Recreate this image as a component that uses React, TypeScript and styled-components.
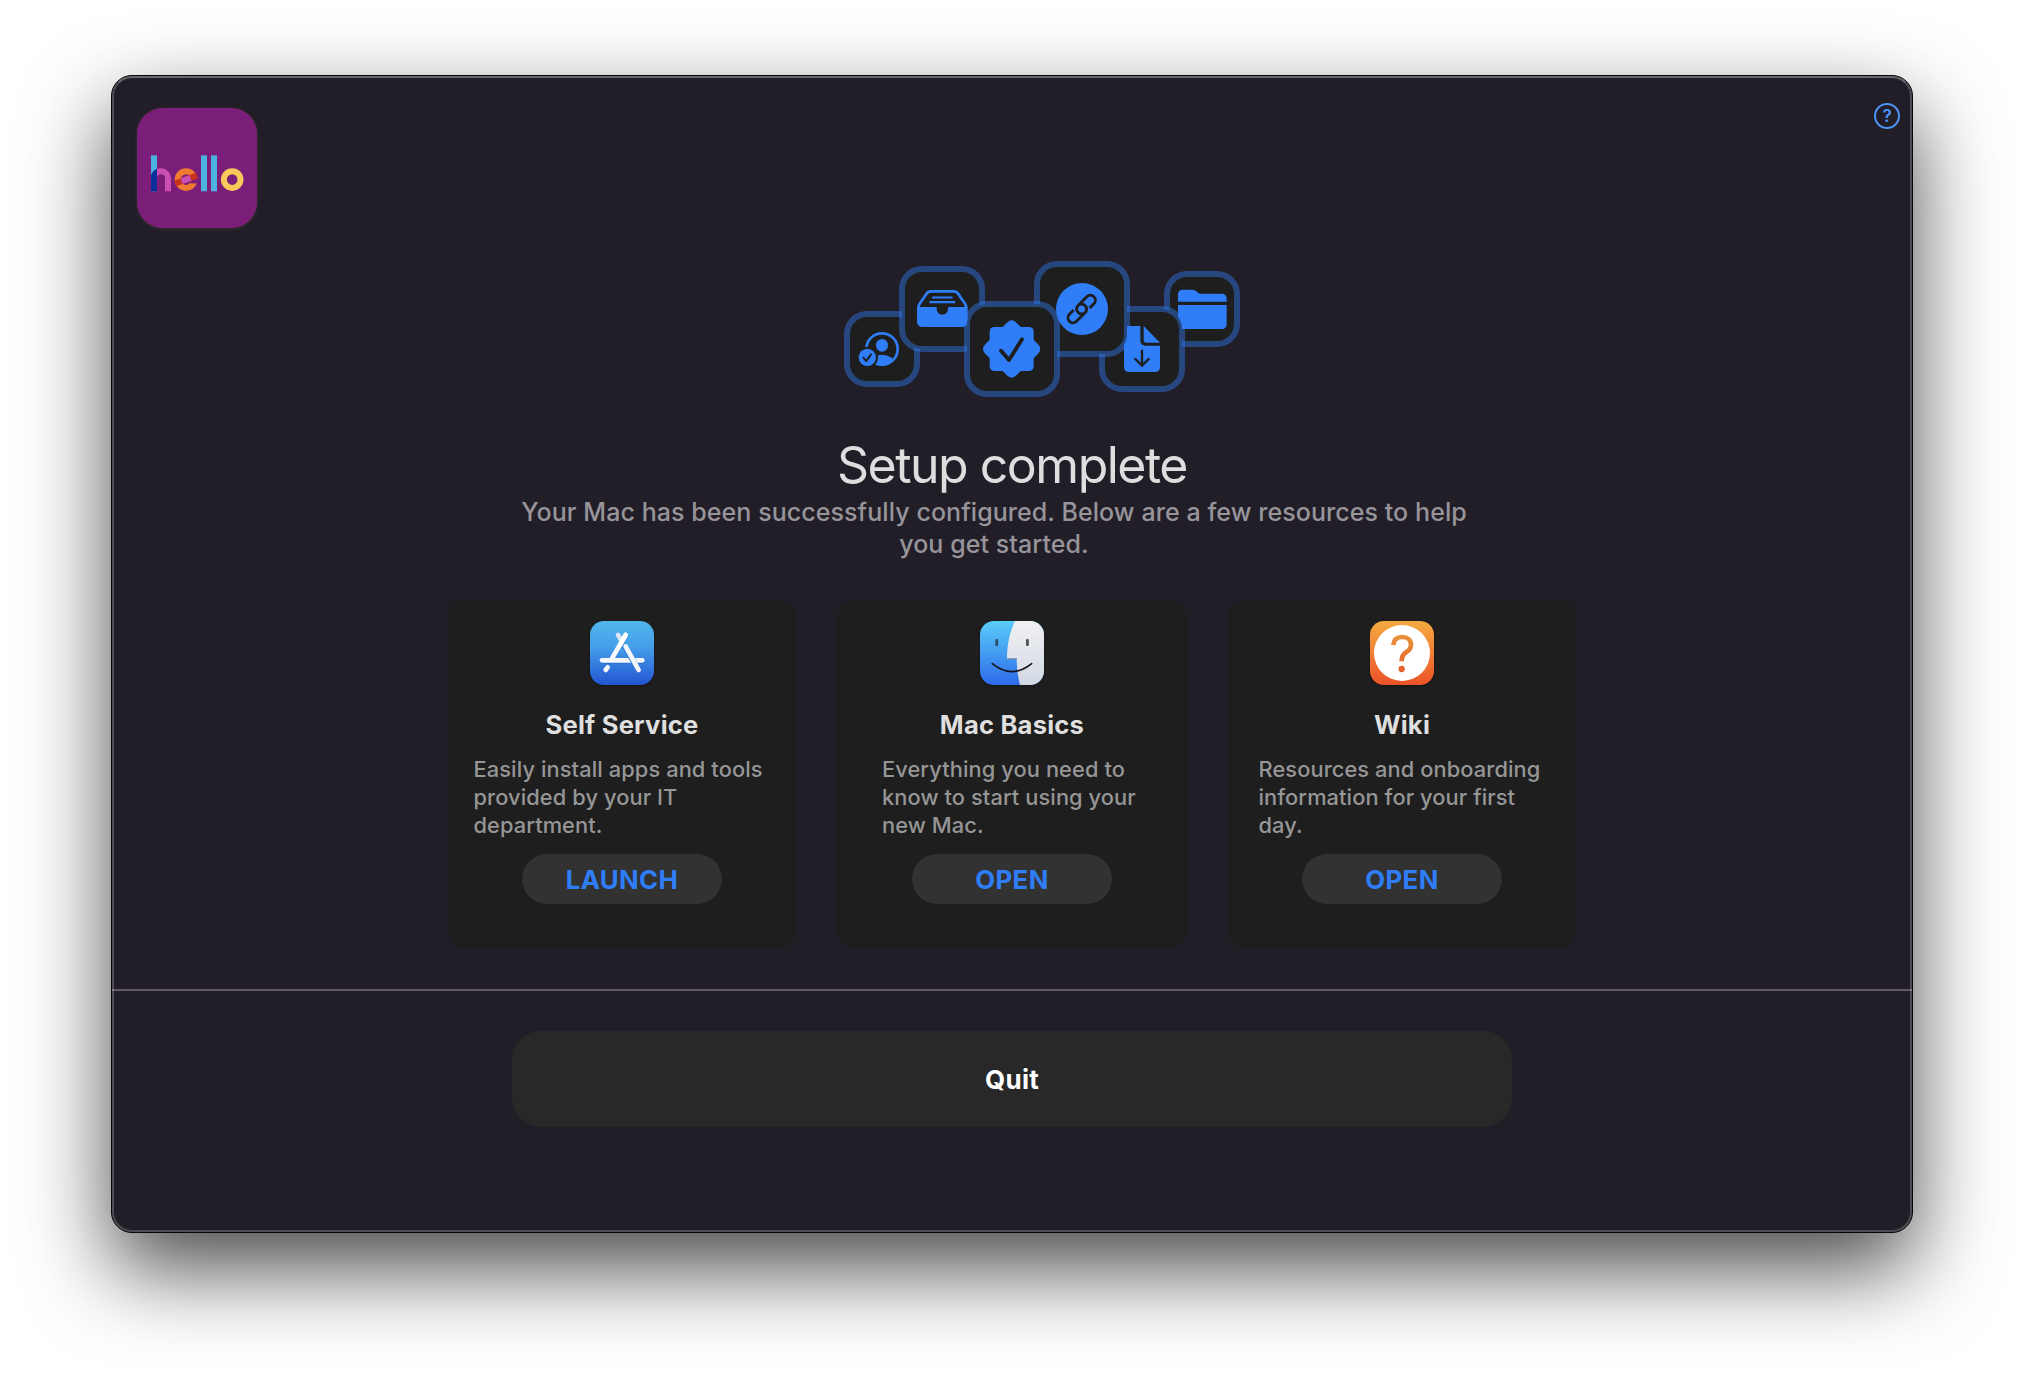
import React from 'react';
import styled, { createGlobalStyle } from 'styled-components';

const BLUE = '#2f7df7';
const DARK = '#1e1e1e';

const GlobalStyle = createGlobalStyle`
  * { box-sizing: border-box; }
  body {
    margin: 0;
    background: #fff;
    font-family: Inter, "Liberation Sans", sans-serif;
    overflow: hidden;
  }
`;

const Page = styled.div`
  display: flex;
  height: 1380px;
  width: 2024px;
  padding: 75px 111px 147px;
`;

const Window = styled.main`
  flex: 1;
  position: relative;
  display: flex;
  flex-direction: column;
  border: 1px solid #050506;
  border-radius: 21px;
  background: #221e28;
  box-shadow: 0 36px 86px rgba(0, 0, 0, 0.71);

  &::after {
    content: '';
    position: absolute;
    inset: 0;
    border-radius: 20px;
    border: 2px solid rgba(255, 255, 255, 0.2);
    border-top-color: rgba(255, 255, 255, 0.33);
    pointer-events: none;
  }
`;

const Content = styled.section`
  height: 913px;
  display: flex;
  flex-direction: column;
  align-items: center;
`;

const TopBar = styled.header`
  align-self: stretch;
  display: flex;
  justify-content: space-between;
  align-items: flex-start;
  padding: 27px 12px 0 25px;
`;

const Logo = styled.div`
  width: 120px;
  height: 120px;
  margin-top: 5px;
  border-radius: 26px;
  background: #7b1e7a;
  box-shadow: 0 0 1px rgba(140, 90, 80, 0.4), 0 1px 4px rgba(90, 90, 80, 0.3);
`;

const HelpButton = styled.button`
  width: 26px;
  height: 26px;
  padding: 0;
  display: flex;
  align-items: center;
  justify-content: center;
  border: 2px solid #4c94f8;
  border-radius: 50%;
  background: transparent;
  color: #4c94f8;
  font: 600 17px/22px Inter, sans-serif;
`;

const Cluster = styled.div`
  display: flex;
  align-items: flex-start;
  height: 136px;
  margin: 33px 0 0 60px;
`;

const Tile = styled.div<{ $size: number; $drop: number; $overlap: number; $layer: number }>`
  position: relative;
  flex: none;
  z-index: ${p => p.$layer};
  width: ${p => p.$size}px;
  height: ${p => p.$size}px;
  margin-top: ${p => p.$drop}px;
  margin-left: ${p => -p.$overlap}px;

  &::before {
    content: '';
    position: absolute;
    inset: 3px;
    border-radius: 20px;
    background: ${DARK};
  }
  &::after {
    content: '';
    position: absolute;
    inset: 0;
    border: 6px solid rgba(47, 125, 247, 0.44);
    border-radius: 23px;
  }
  svg {
    position: relative;
    display: block;
    width: 100%;
    height: 100%;
  }
`;

const Title = styled.h1`
  margin: 38px 0 0;
  font-size: 50px;
  line-height: 60px;
  font-weight: 440;
  letter-spacing: -1.5px;
  color: #dfdedf;
`;

const Subtitle = styled.p`
  width: 960px;
  margin: 1px 36px 0 0;
  font-size: 25px;
  line-height: 32px;
  font-weight: 500;
  letter-spacing: 0.07px;
  text-align: center;
  color: #97949a;
`;

const Cards = styled.div`
  display: flex;
  gap: 40px;
  margin-top: 39px;
`;

const Card = styled.article`
  width: 350px;
  height: 350px;
  padding-top: 22px;
  display: flex;
  flex-direction: column;
  align-items: center;
  border-radius: 20px;
  background: ${DARK};

  > svg {
    width: 64px;
    height: 64px;
    border-radius: 14px;
    flex: none;
    filter: drop-shadow(0 1px 1px rgba(0, 0, 0, 0.35));
  }
`;

const CardTitle = styled.h2`
  margin: 24px 0 14px;
  font-size: 25.6px;
  line-height: 32px;
  font-weight: 750;
  letter-spacing: 0.2px;
  color: #dfdfdf;
`;

const CardText = styled.p<{ $width: number }>`
  width: ${p => p.$width}px;
  height: 84px;
  margin: 0 0 15px;
  font-size: 21.8px;
  line-height: 28px;
  font-weight: 500;
  letter-spacing: 0.1px;
  white-space: pre-line;
  color: #969696;
`;

const CardButton = styled.button`
  width: 200px;
  height: 50px;
  padding: 1px 0 0;
  border: 0;
  border-radius: 25px;
  background: #323232;
  color: ${BLUE};
  font: 700 25.8px/49px Inter, sans-serif;
  letter-spacing: 0.35px;
`;

const Divider = styled.div`
  height: 2px;
  background: #5e5963;
`;

const Footer = styled.footer`
  display: flex;
  justify-content: center;
  padding-top: 40px;
`;

const QuitButton = styled.button`
  width: 1000px;
  height: 96px;
  padding: 2px 0 0;
  border: 0;
  border-radius: 29px;
  background: #282828;
  color: #fff;
  font: 750 26px/94px Inter, sans-serif;
  letter-spacing: 0.3px;
`;

const HelloMark = () => (
  <svg viewBox="0 0 120 120" width="120" height="120" role="img" aria-label="hello">
    <defs>
      <clipPath id="arch"><rect x="20" y="58" width="16" height="12" /></clipPath>
      <clipPath id="stem"><rect x="14" y="58" width="6" height="26" /></clipPath>
    </defs>
    <rect x="14" y="47.3" width="6" height="36" fill="#4cb2e0" />
    <g clipPath="url(#stem)" fill="#082f9a">
      <circle cx="24" cy="70.3" r="10.4" />
      <rect x="14" y="70" width="6" height="13.3" />
    </g>
    <circle cx="24" cy="70.3" r="7" fill="none" stroke="#c94fb0" strokeWidth="6" clipPath="url(#arch)" />
    <rect x="28" y="70" width="6" height="13.3" fill="#c94fb0" />
    <circle cx="49" cy="71.6" r="8.3" fill="none" stroke="#ee7b2e" strokeWidth="6" />
    <rect x="53.5" y="71" width="9" height="4.6" fill="#7b1e7a" transform="rotate(-2 54 72)" />
    <g transform="rotate(-20 49 71.6)">
      <rect x="37.5" y="68.6" width="23.2" height="6" fill="#c8301f" />
      <rect x="44.4" y="68.6" width="9.4" height="6" fill="#c94fb0" />
    </g>
    <rect x="64" y="47.3" width="6" height="36" fill="#4cb2e0" />
    <rect x="74" y="47.3" width="6" height="36" fill="#4cb2e0" />
    <circle cx="95.2" cy="71.6" r="8.3" fill="none" stroke="#f9c95c" strokeWidth="6" />
  </svg>
);

const PersonIcon = () => (
  <svg viewBox="43 183 228 228">
    <defs><clipPath id="bust"><circle cx="157" cy="297" r="50" /></clipPath></defs>
    <circle cx="157" cy="297" r="47" fill="none" stroke={BLUE} strokeWidth="8" />
    <ellipse cx="157" cy="286" rx="18" ry="19" fill={BLUE} />
    <ellipse cx="157" cy="343" rx="39" ry="29" fill={BLUE} clipPath="url(#bust)" />
    <circle cx="113" cy="322" r="32" fill={DARK} />
    <circle cx="113" cy="322" r="26" fill={BLUE} />
    <path d="M101 323l9 10 14-20" fill="none" stroke={DARK} strokeWidth="6" strokeLinecap="round" strokeLinejoin="round" />
  </svg>
);

const TrayIcon = () => (
  <svg viewBox="207 48 258 258">
    <path d="M265 174Q265 168 268 163L289 132Q294 124 303 124H371Q380 124 385 132L406 163Q409 168 409 174" fill="none" stroke={BLUE} strokeWidth="8" />
    <path d="M261 171H320V177a17 17 0 0 0 34 0V171H413V215a16 16 0 0 1-16 16H277a16 16 0 0 1-16-16Z" fill={BLUE} />
    <path d="M309 142.500H365M301 156.500H373" stroke={BLUE} strokeWidth="6.500" strokeLinecap="round" />
  </svg>
);

const SealIcon = () => (
  <svg viewBox="402 153 288 288">
    <g fill={BLUE}>
      <rect x="479" y="231" width="132" height="132" rx="14" />
      <rect x="479" y="231" width="132" height="132" rx="18" transform="rotate(45 545 297)" />
    </g>
    <path d="M513 302L537 330L576 268" fill="none" stroke={DARK} strokeWidth="11.5" strokeLinecap="round" strokeLinejoin="round" />
  </svg>
);

const LinkIcon = () => (
  <svg viewBox="42 33 288 288">
    <circle cx="186" cy="177" r="78" fill={BLUE} />
    <g transform="translate(185 177) rotate(-45)" fill="none" stroke={DARK} strokeWidth="8.5">
      <path d="M19 15H37A15 15 0 0 0 37-15H-1A15 15 0 0 0-5 14" />
      <path d="M-19-15H-37A15 15 0 0 0-37 15H1A15 15 0 0 0 5-14" />
    </g>
  </svg>
);

const DocumentIcon = () => (
  <svg viewBox="237 168 258 258">
    <path d="M326 228H361V272a15 15 0 0 0 15 15H420V352a14 14 0 0 1-14 14H326a14 14 0 0 1-14-14V242a14 14 0 0 1 14-14Z" fill={BLUE} />
    <path d="M371 228L420 278H378a7 7 0 0 1-7-7Z" fill={BLUE} />
    <path d="M366 302V347M346 327L366 347L386 327" fill="none" stroke={DARK} strokeWidth="7" strokeLinecap="round" strokeLinejoin="round" />
  </svg>
);

const FolderIcon = () => (
  <svg viewBox="432 63 228 228">
    <g fill={BLUE}>
      <path d="M474 155.500V133a14 14 0 0 1 14-14H517Q523 119 527 122L534 128Q538 131 543 131H606a14 14 0 0 1 14 14V155.500Z" />
      <path d="M474 165H620V223a14 14 0 0 1-14 14H488a14 14 0 0 1-14-14Z" />
    </g>
  </svg>
);

const AppStoreIcon = () => (
  <svg viewBox="90 63 192 192">
    <defs>
      <linearGradient id="store" x1="0" y1="0" x2="0" y2="1">
        <stop offset="0" stopColor="#51b6ea" />
        <stop offset="0.4" stopColor="#459fea" />
        <stop offset="1" stopColor="#2355d2" />
      </linearGradient>
    </defs>
    <rect x="90" y="63" width="192" height="192" fill="url(#store)" />
    <g fill="none" strokeLinecap="round">
      <g stroke="#1e4fae" strokeOpacity="0.35" strokeWidth="15" transform="translate(0 3)">
        <path d="M126 181H198M240 181H247M197 105L156 175M143 202L137 211M196 141L236 210" />
      </g>
      <g stroke="#f6f8fc" strokeWidth="14">
        <path d="M174 105L181 116" stroke="#dbe6f5" />
        <path d="M126 181H247" />
        <path d="M197 105L155 177" />
        <path d="M143 202L137 210" />
      </g>
      <path d="M194 138L234 208" stroke="#3a83e0" strokeWidth="17" strokeLinecap="butt" />
      <path d="M197 139L236 210" stroke="#f6f8fc" strokeWidth="14" />
      <path d="M197 105L180 134" stroke="#fff" strokeWidth="14" />
    </g>
  </svg>
);

const FinderIcon = () => (
  <svg viewBox="90 63 192 192">
    <defs>
      <linearGradient id="faceLeft" x1="0" y1="0" x2="0" y2="1">
        <stop offset="0" stopColor="#5accf8" />
        <stop offset="1" stopColor="#2e6bea" />
      </linearGradient>
      <linearGradient id="faceRight" x1="0" y1="0" x2="0" y2="1">
        <stop offset="0" stopColor="#f0f0f2" />
        <stop offset="1" stopColor="#d2d9e5" />
      </linearGradient>
    </defs>
    <rect x="90" y="63" width="192" height="192" fill="url(#faceLeft)" />
    <path d="M195 63C180 95 171 132 171 176H200C200 205 204 230 210 255H282V63Z" fill="url(#faceRight)" />
    <path d="M172 176H201" stroke="#8a8f9a" strokeWidth="3" />
    <rect x="136" y="117" width="8.500" height="21" rx="3" fill="#2b4e66" />
    <rect x="228" y="117" width="8.500" height="21" rx="3" fill="#505155" />
    <path d="M127 191Q186 239 245 191" fill="none" stroke="#15171c" strokeWidth="5" strokeLinecap="round" />
  </svg>
);

const WikiIcon = () => (
  <svg viewBox="90 63 192 192">
    <defs>
      <linearGradient id="orange" gradientUnits="userSpaceOnUse" x1="0" y1="63" x2="0" y2="255">
        <stop offset="0" stopColor="#f3ab40" />
        <stop offset="1" stopColor="#ec5228" />
      </linearGradient>
      <linearGradient id="mark" gradientUnits="userSpaceOnUse" x1="0" y1="105" x2="0" y2="216">
        <stop offset="0" stopColor="#e8923a" />
        <stop offset="1" stopColor="#e5602b" />
      </linearGradient>
    </defs>
    <rect x="90" y="63" width="192" height="192" fill="url(#orange)" />
    <circle cx="186" cy="159" r="84" fill="#fff" />
    <path d="M160 135C161 119 171 111 187 111C203 111 213 121 213 134C213 145 207 151 199 156C190 162 185 168 185 184" fill="none" stroke="url(#mark)" strokeWidth="14" />
    <circle cx="185" cy="207" r="9.500" fill="url(#mark)" />
  </svg>
);

const tiles = [
  { size: 76, drop: 50, overlap: 0, layer: 1, Icon: PersonIcon },
  { size: 86, drop: 5, overlap: 21, layer: 2, Icon: TrayIcon },
  { size: 96, drop: 40, overlap: 21, layer: 4, Icon: SealIcon },
  { size: 96, drop: 0, overlap: 26, layer: 3, Icon: LinkIcon },
  { size: 86, drop: 45, overlap: 31, layer: 2, Icon: DocumentIcon },
  { size: 76, drop: 10, overlap: 21, layer: 1, Icon: FolderIcon },
];

const resources = [
  { title: 'Self Service', text: 'Easily install apps and tools\nprovided by your IT\ndepartment.', width: 297, action: 'LAUNCH', Icon: AppStoreIcon },
  { title: 'Mac Basics', text: 'Everything you need to\nknow to start using your\nnew Mac.', width: 260, action: 'OPEN', Icon: FinderIcon },
  { title: 'Wiki', text: 'Resources and onboarding\ninformation for your first\nday.', width: 287, action: 'OPEN', Icon: WikiIcon },
];

export default function App() {
  return (
    <Page>
      <GlobalStyle />
      <Window>
        <Content>
          <TopBar>
            <Logo><HelloMark /></Logo>
            <HelpButton>?</HelpButton>
          </TopBar>
          <Cluster>
            {tiles.map(({ size, drop, overlap, layer, Icon }, i) => (
              <Tile key={i} $size={size} $drop={drop} $overlap={overlap} $layer={layer}>
                <Icon />
              </Tile>
            ))}
          </Cluster>
          <Title>Setup complete</Title>
          <Subtitle>
            Your Mac has been successfully configured. Below are a few resources to help you get started.
          </Subtitle>
          <Cards>
            {resources.map(({ title, text, width, action, Icon }) => (
              <Card key={title}>
                <Icon />
                <CardTitle>{title}</CardTitle>
                <CardText $width={width}>{text}</CardText>
                <CardButton>{action}</CardButton>
              </Card>
            ))}
          </Cards>
        </Content>
        <Divider />
        <Footer>
          <QuitButton>Quit</QuitButton>
        </Footer>
      </Window>
    </Page>
  );
}
